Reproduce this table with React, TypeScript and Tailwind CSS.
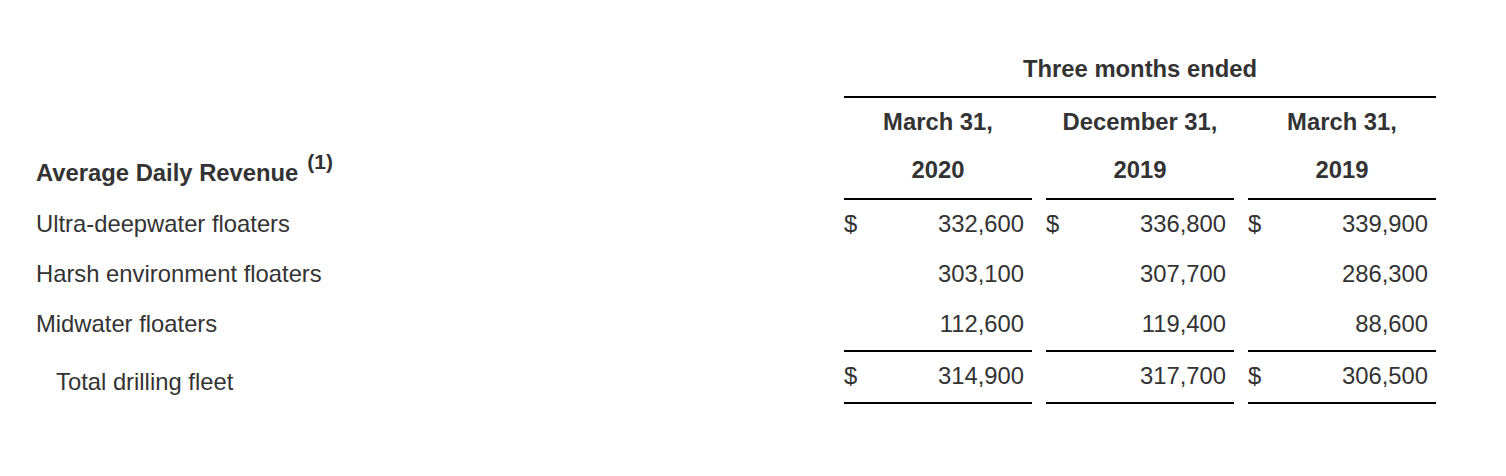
import React from 'react';

interface Row {
  label: string;
  values: { dollar: boolean; amount: string }[];
}

const rows: Row[] = [
  {
    label: 'Ultra-deepwater floaters',
    values: [
      { dollar: true, amount: '332,600' },
      { dollar: true, amount: '336,800' },
      { dollar: true, amount: '339,900' },
    ],
  },
  {
    label: 'Harsh environment floaters',
    values: [
      { dollar: false, amount: '303,100' },
      { dollar: false, amount: '307,700' },
      { dollar: false, amount: '286,300' },
    ],
  },
  {
    label: 'Midwater floaters',
    values: [
      { dollar: false, amount: '112,600' },
      { dollar: false, amount: '119,400' },
      { dollar: false, amount: '88,600' },
    ],
  },
];

const totalRow: Row = {
  label: 'Total drilling fleet',
  values: [
    { dollar: true, amount: '314,900' },
    { dollar: false, amount: '317,700' },
    { dollar: true, amount: '306,500' },
  ],
};

const periods = [
  { top: 'March 31,', bottom: '2020' },
  { top: 'December 31,', bottom: '2019' },
  { top: 'March 31,', bottom: '2019' },
];

const App: React.FC = () => {
  return (
    <div className="w-[1506px] h-[476px] bg-white text-[#333333] text-[23.8px] font-['Liberation_Sans',Arial,sans-serif] pt-[46px] pr-[70px]">
      <div className="grid grid-cols-[1fr_188px_188px_188px] gap-x-[14px]">
        {/* Header */}
        <div />
        <div className="col-span-3 h-[52px] pb-[4px] border-b-2 border-black flex items-center justify-center font-bold">
          Three months ended
        </div>

        <div />
        {periods.map((p, i) => (
          <div key={`t${i}`} className="h-[50px] pb-[2px] flex items-center justify-center font-bold">
            {p.top}
          </div>
        ))}

        <div className="h-[50px] flex items-center pl-[36px] font-bold">
          Average Daily Revenue
          <sup className="text-[21px] ml-[9px] -top-[11px] relative align-baseline">(1)</sup>
        </div>
        {periods.map((p, i) => (
          <div key={`b${i}`} className="h-[52px] pb-[6px] border-b-2 border-black flex items-center justify-center font-bold">
            {p.bottom}
          </div>
        ))}

        {/* Body */}
        {rows.map((r, ri) => (
          <React.Fragment key={ri}>
            <div className={`flex items-center pl-[36px] pb-[2px] ${ri === rows.length - 1 ? 'h-[52px] pb-[4px]' : 'h-[50px]'}`}>
              {r.label}
            </div>
            {r.values.map((v, vi) => (
              <div
                key={vi}
                className={`flex items-center justify-between pr-[8px] ${ri === rows.length - 1 ? 'h-[52px] pb-[2px] border-b-2 border-black' : 'h-[50px] pb-[2px]'}`}
              >
                <span>{v.dollar ? '$' : ''}</span>
                <span>{v.amount}</span>
              </div>
            ))}
          </React.Fragment>
        ))}

        <div className="h-[52px] flex items-center pl-[56px] pt-[8px]">{totalRow.label}</div>
        {totalRow.values.map((v, vi) => (
          <div key={vi} className="h-[52px] pb-[2px] border-b-2 border-black flex items-center justify-between pr-[8px]">
            <span>{v.dollar ? '$' : ''}</span>
            <span>{v.amount}</span>
          </div>
        ))}
      </div>
    </div>
  );
};

export default App;
